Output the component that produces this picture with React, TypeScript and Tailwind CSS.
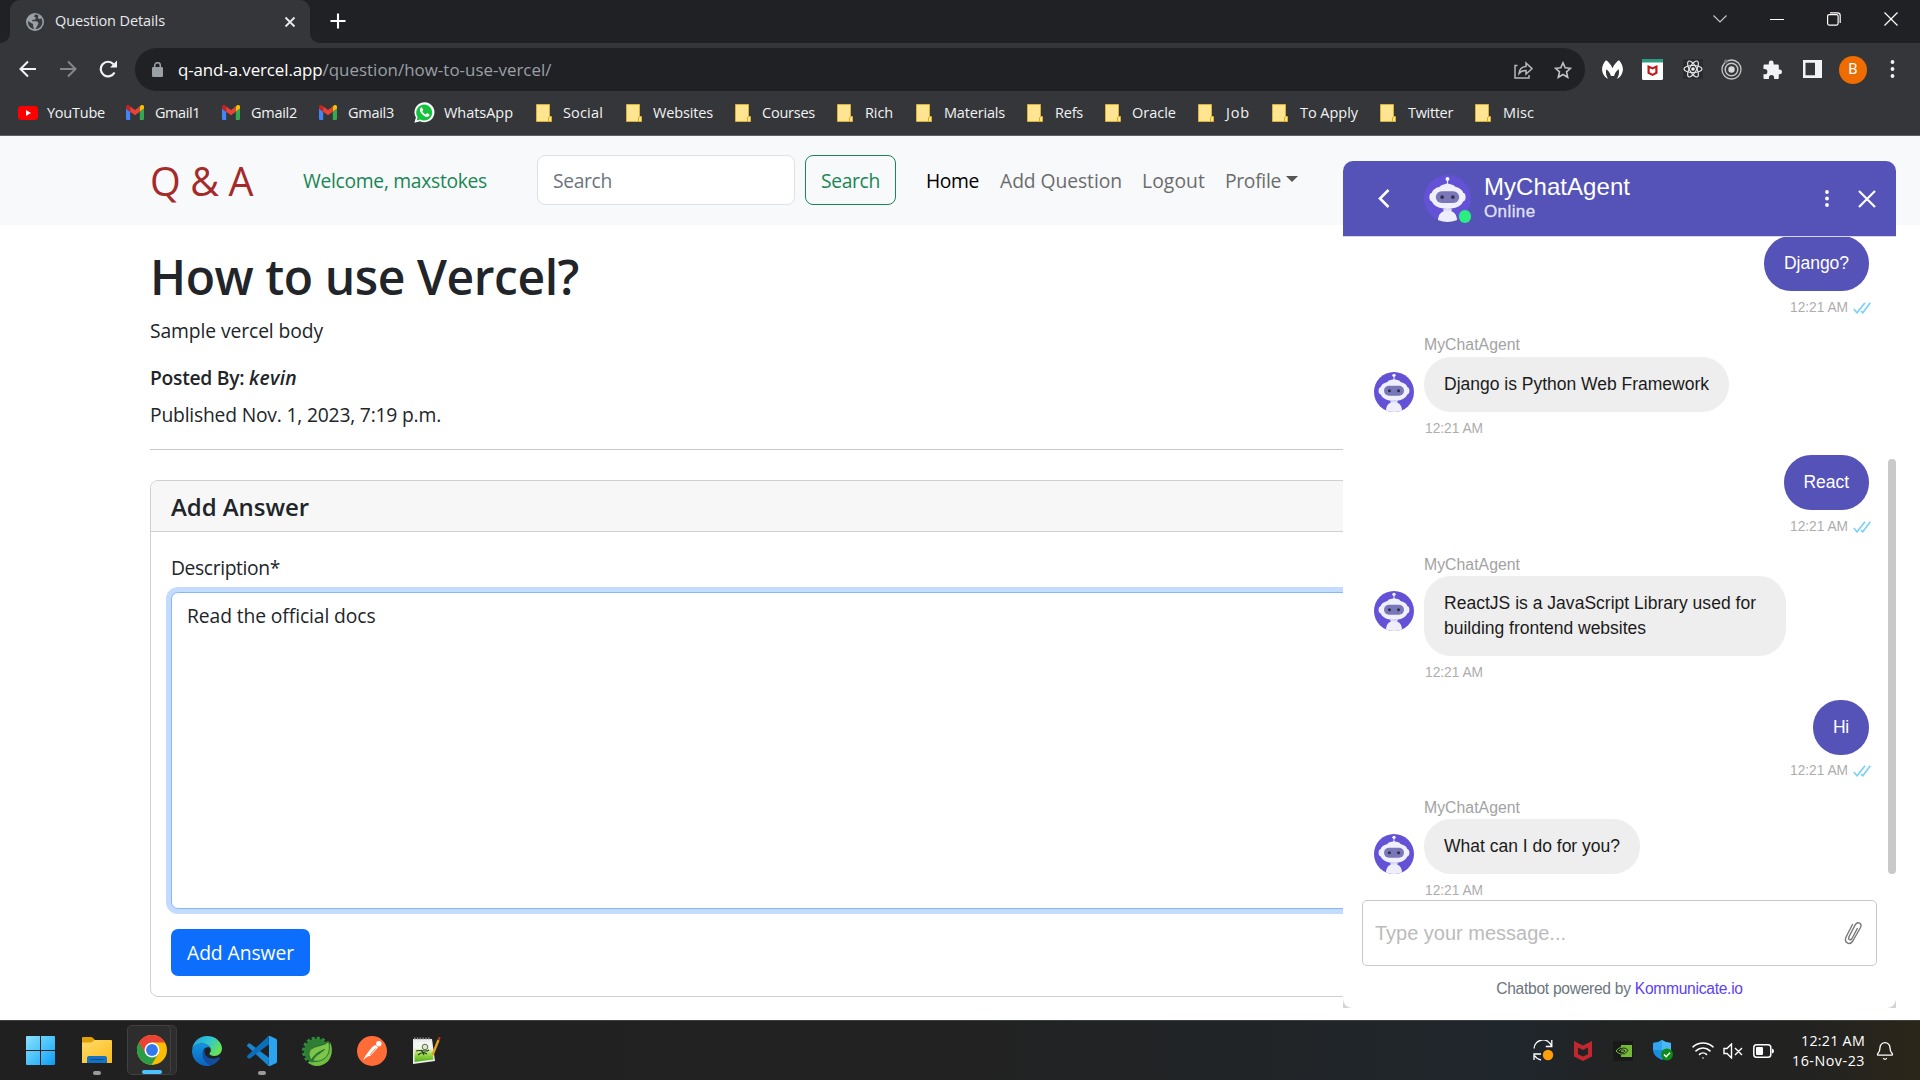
import { useLayoutEffect, useRef, useState } from "react";
import type { ReactNode } from "react";
import { Wifi, Bell } from "lucide-react";

/** Text run whose tracking is adjusted so that it occupies exactly `w` pixels. */
function Fit({ w, children, className = "" }: { w: number; children: string; className?: string }) {
  const ref = useRef<HTMLSpanElement>(null);
  const [spacing, setSpacing] = useState(0);
  useLayoutEffect(() => {
    const el = ref.current;
    if (el) setSpacing((w - el.getBoundingClientRect().width) / children.length);
  }, [w, children]);
  return (
    <span ref={ref} className={`inline-block whitespace-pre ${className}`} style={{ letterSpacing: `${spacing}px` }}>
      {children}
    </span>
  );
}

/* ---------- browser icons ---------- */

const GlobeIcon = () => (
  <svg width="18" height="18" viewBox="0 0 18 18">
    <circle cx="9" cy="9" r="9" fill="#9aa0a6" />
    <path d="M2 8l3 2 2 1v2l1 3c-4-.6-6.500-4-6-8z M9 1.600l-1 2 2 1.200-1 2H6.500L6 8.200h5l1.500 2-1 2.300-2 3.700c4-.2 6.900-3.500 6.900-7.200 0-1.400-.4-2.700-1-3.700l-2 .7-1.600-1 .8-2.600C11.400 1.800 10.200 1.500 9 1.600z" fill="#3a3b3f" />
  </svg>
);

const GmailIcon = () => (
  <svg width="18" height="15" viewBox="0 0 18 15">
    <path d="M0 3.500L4.200 6.700V15H1.200A1.200 1.200 0 0 1 0 13.800z" fill="#4285f4" />
    <path d="M18 3.500l-4.200 3.200V15h3a1.200 1.200 0 0 0 1.200-1.200z" fill="#34a853" />
    <path d="M13.800 1.400v5.300L18 3.500V2c0-2-2-2.500-3.200-1.500z" fill="#fbbc04" />
    <path d="M0 3.500l4.200 3.200V1.400L3.200.5C2-.5 0 0 0 2z" fill="#c5221f" />
    <path d="M4.200 6.700V1.400L9 5l4.800-3.600v5.300L9 10.300z" fill="#ea4335" />
  </svg>
);

const YouTubeIcon = () => (
  <svg width="20" height="14" viewBox="0 0 20 14">
    <rect width="20" height="14" rx="3.500" fill="#f00" />
    <path d="M8 4l5 3-5 3z" fill="#fff" />
  </svg>
);

const WhatsAppIcon = () => (
  <svg width="21" height="21" viewBox="0 0 21 21">
    <path d="M.4 20.700l1.500-5.300A10 10 0 1 1 6 19.200z" fill="#fff" />
    <path d="M2.700 18.400l.9-3.300A8 8 0 1 1 6.200 17.500z" fill="#14c23d" />
    <path d="M7.400 5.600c-.6 0-1.700 1-1.500 2.600.3 2.800 4.200 6.600 7 6.600 1.400 0 2.500-1 2.500-1.900 0-.6-.2-.7-2.200-1.600-.5-.2-1 1.100-1.500 1.100-.7 0-3.300-2.200-3.300-2.900 0-.4.900-.9.800-1.400l-.9-2.100c-.2-.4-.5-.4-.9-.4z" fill="#fff" />
  </svg>
);

const FolderIcon = () => (
  <svg width="16" height="18" viewBox="0 0 16 18">
    <path d="M.5.500h13v12h2v5H.5z" fill="#ffe591" stroke="#d9b13a" strokeWidth="1" />
    <path d="M12.500 17.500v-3.500l1-1.500" fill="none" stroke="#d9a91e" />
  </svg>
);

const BOOKMARKS: { label: string; icon: "yt" | "gm" | "wa" | "folder"; slot: string; pad: string; w: number }[] = [
  { label: "YouTube", icon: "yt", slot: "w-[108px]", pad: "w-[29px]", w: 58 },
  { label: "Gmail1", icon: "gm", slot: "w-[96px]", pad: "w-[29px]", w: 45 },
  { label: "Gmail2", icon: "gm", slot: "w-[97px]", pad: "w-[29px]", w: 46 },
  { label: "Gmail3", icon: "gm", slot: "w-[95px]", pad: "w-[29px]", w: 46 },
  { label: "WhatsApp", icon: "wa", slot: "w-[122px]", pad: "w-[30px]", w: 69 },
  { label: "Social", icon: "folder", slot: "w-[90px]", pad: "w-[27px]", w: 40 },
  { label: "Websites", icon: "folder", slot: "w-[109px]", pad: "w-[27px]", w: 60 },
  { label: "Courses", icon: "folder", slot: "w-[102px]", pad: "w-[27px]", w: 53 },
  { label: "Rich", icon: "folder", slot: "w-[79px]", pad: "w-[28px]", w: 28 },
  { label: "Materials", icon: "folder", slot: "w-[111px]", pad: "w-[28px]", w: 61 },
  { label: "Refs", icon: "folder", slot: "w-[78px]", pad: "w-[28px]", w: 28 },
  { label: "Oracle", icon: "folder", slot: "w-[93px]", pad: "w-[27px]", w: 44 },
  { label: "Job", icon: "folder", slot: "w-[74px]", pad: "w-[28px]", w: 24 },
  { label: "To Apply", icon: "folder", slot: "w-[108px]", pad: "w-[28px]", w: 58 },
  { label: "Twitter", icon: "folder", slot: "w-[95px]", pad: "w-[28px]", w: 45 },
  { label: "Misc", icon: "folder", slot: "w-[95px]", pad: "w-[28px]", w: 31 },
];

const BOOKMARK_ICONS = { yt: <YouTubeIcon />, gm: <GmailIcon />, wa: <WhatsAppIcon />, folder: <FolderIcon /> };

function TabStrip() {
  return (
    <div className="flex h-[43px] items-end bg-[#202124]">
      <svg className="shrink-0" width="10" height="10" viewBox="0 0 10 10"><path d="M0 10h10V0a10 10 0 0 1-10 10z" fill="#35363a" /></svg>
      <div className="flex h-[43px] w-[300px] items-center rounded-t-[10px] bg-[#35363a] pl-4">
        <GlobeIcon />
        <div className="ml-[11px] flex-1 pb-[2px] text-[14.500px] leading-[20px] text-[#e8eaed]"><Fit w={110}>Question Details</Fit></div>
        <svg className="mr-[14px]" width="12" height="12" viewBox="0 0 12 12"><path d="M1.500 1.500l9 9M10.500 1.500l-9 9" stroke="#e8eaed" strokeWidth="1.800" /></svg>
      </div>
      <svg className="shrink-0" width="10" height="10" viewBox="0 0 10 10"><path d="M10 10H0V0a10 10 0 0 0 10 10z" fill="#35363a" /></svg>
      <div className="flex h-[43px] flex-1 items-center pb-px pl-[9.500px]">
        <svg width="16" height="16" viewBox="0 0 16 16"><path d="M8 .5v15M.5 8h15" stroke="#fff" strokeWidth="2.100" /></svg>
      </div>
      <div className="flex h-[38px] items-center self-start text-white">
        <svg width="14" height="8" viewBox="0 0 14 8"><path d="M.5.500L7 7 13.500.500" fill="none" stroke="#c4c5c7" strokeWidth="1.200" /></svg>
        <div className="ml-[43px] h-px w-[14px] bg-white" />
        <svg className="ml-[43px]" width="14" height="14" viewBox="0 0 14 14" fill="none" stroke="#fff" strokeWidth="1.200"><rect x=".6" y="2.600" width="10.500" height="10.500" rx="1.500" /><path d="M3 .8h7.500a2.700 2.700 0 0 1 2.700 2.700V11" /></svg>
        <svg className="ml-[43px] mr-[22px]" width="14" height="14" viewBox="0 0 14 14"><path d="M.5.500l13 13M13.500.500l-13 13" stroke="#fff" strokeWidth="1.200" /></svg>
      </div>
    </div>
  );
}

function Toolbar() {
  return (
    <div className="flex h-[53px] items-center">
      <svg className="-mt-[2px] ml-[19px]" width="18" height="18" viewBox="0 0 18 18" fill="none" stroke="#f1f3f4" strokeWidth="2"><path d="M17 9H2M9 1.500L1.500 9 9 16.500" /></svg>
      <svg className="-mt-[2px] ml-[22px]" width="18" height="18" viewBox="0 0 18 18" fill="none" stroke="#85868a" strokeWidth="2"><path d="M1 9h15M9 1.500L16.500 9 9 16.500" /></svg>
      <svg className="-mt-[2px] ml-[22px]" width="19" height="18" viewBox="0 0 19 18"><path d="M15.500 12.500A7.300 7.300 0 1 1 14.500 4.200" fill="none" stroke="#f1f3f4" strokeWidth="2.200" /><path d="M18 .5v7h-7z" fill="#f1f3f4" /></svg>
      <div className="ml-[17px] flex h-[43px] w-[1450px] items-center rounded-full bg-[#202124] pl-[17px] pr-[13px]">
        <svg width="11" height="15" viewBox="0 0 11 15"><rect y="5" width="11" height="10" rx="1.200" fill="#9aa0a6" /><path d="M2.700 6V3.500a2.800 2.800 0 0 1 5.600 0V6" fill="none" stroke="#9aa0a6" strokeWidth="1.500" /></svg>
        <div className="ml-[15px] flex-1 pt-[1px] text-[16.900px] leading-[24px] text-white">
          <Fit w={144.5}>q-and-a.vercel.app</Fit>
          <Fit w={229} className="text-[#9aa0a6]">/question/how-to-use-vercel/</Fit>
        </div>
        <svg className="mr-[21px]" width="19" height="18" viewBox="0 0 19 18" fill="none" stroke="#b4b7bb" strokeWidth="1.500"><path d="M3.500 4.500H1V17h14v-3" /><path d="M5 12.500c.3-4.500 3-6.800 7-7.100V2l6 5.700-6 5.300V9.600c-3-.1-5.500.9-7 2.900z" /></svg>
        <svg width="18" height="18" viewBox="0 0 18 18" fill="none" stroke="#c0c3c7" strokeWidth="1.600"><path d="M9 1.800l2.200 5 5.300.5-4 3.600 1.200 5.400L9 13.500l-4.700 2.800 1.200-5.400-4-3.600 5.300-.5z" /></svg>
      </div>
      <svg className="-mt-[1px] ml-[17px]" width="21" height="19" viewBox="0 0 21 19"><path d="M4 .3c2.600 1.400 4.800 4.300 6.500 7.900C12.200 4.600 14.400 1.700 17 .3c3.700 4 5.300 9.500 2.500 14.200-.9 1.700-2.300 3.300-4.700 4.200 2.100-3 2.600-5.700 1.900-9.400-2.200 1.500-3.700 3.400-4.600 6.700H8.900C8 12.700 6.500 10.800 4.300 9.300c-.7 3.700-.2 6.400 1.900 9.400-2.400-.9-3.800-2.500-4.700-4.200C-1.300 9.800.3 4.300 4 .3z" fill="#fff" /></svg>
      <svg className="-mt-[1px] ml-[19px]" width="21" height="21" viewBox="0 0 21 21"><rect width="21" height="21" rx="1.500" fill="#fff" /><path d="M0 0h21v3.500H0z" fill="#2e9c84" /><path d="M5.500 6l5 2.300 5-2.300v8.500L10.500 17l-5-2.500zM7.700 9.300v4l2.800 1.400 2.800-1.400v-4l-2.800 1.300z" fill="#c01818" fillRule="evenodd" /></svg>
      <svg className="-mt-[2px] ml-[20px]" width="20" height="20" viewBox="0 0 20 20"><rect width="20" height="20" fill="#292b2e" /><g fill="none" stroke="#e5e5e5" strokeWidth="1.200"><ellipse cx="10" cy="10" rx="9" ry="3.500" /><ellipse cx="10" cy="10" rx="9" ry="3.500" transform="rotate(60 10 10)" /><ellipse cx="10" cy="10" rx="9" ry="3.500" transform="rotate(120 10 10)" /></g><circle cx="10" cy="10" r="1.800" fill="#eee" /></svg>
      <svg className="-mt-[1px] ml-[18px]" width="21" height="21" viewBox="0 0 21 21" fill="none" stroke="#c4c4c4"><circle cx="10.500" cy="10.500" r="9.500" strokeWidth="1.300" /><circle cx="10.500" cy="10.500" r="6.300" strokeWidth="1.500" /><circle cx="10.500" cy="10.500" r="3.200" fill="#d8d8d8" stroke="none" /><circle cx="5" cy="2.500" r="2" fill="#777" stroke="none" /></svg>
      <svg className="-mt-[1px] ml-[21px]" width="19" height="19" viewBox="0 0 19 19"><path d="M1.500 4.500h4.300V3a2.400 2.400 0 0 1 4.800 0v1.500h4.200a1 1 0 0 1 1 1v4h.8a2.400 2.400 0 0 1 0 4.800h-.8V18a1 1 0 0 1-1 1h-3.700v-1.300a2.600 2.600 0 0 0-5.200 0V19H1.500a1 1 0 0 1-1-1v-3.700h1.300a2.600 2.600 0 0 0 0-5.200H.5V5.500a1 1 0 0 1 1-1z" fill="#f1f3f4" /></svg>
      <svg className="-mt-[2px] ml-[21px]" width="19" height="18" viewBox="0 0 19 18"><path fillRule="evenodd" d="M0 0h19v18H0zM2.500 2.700v12.600H12V2.700z" fill="#f1f3f4" /></svg>
      <div className="ml-[17px] flex h-[28px] w-[28px] items-center justify-center rounded-full bg-[#ef6c00] font-[Roboto] text-[15px] text-white">B</div>
      <svg className="-mt-[1px] ml-[23px]" width="5" height="18" viewBox="0 0 5 18" fill="#f1f3f4"><circle cx="2.500" cy="2" r="1.900" /><circle cx="2.500" cy="9" r="1.900" /><circle cx="2.500" cy="16" r="1.900" /></svg>
    </div>
  );
}

function Bookmarks() {
  return (
    <div className="flex h-[40px] items-center border-b border-[#5f6063] pl-[18px] pb-[6px]">
      {BOOKMARKS.map((b) => (
        <div key={b.label} className={`flex shrink-0 items-center ${b.slot}`}>
          <div className={`shrink-0 ${b.pad}`}>{BOOKMARK_ICONS[b.icon]}</div>
          <div className="text-[14.500px] leading-[20px] text-[#f1f3f4]"><Fit w={b.w}>{b.label}</Fit></div>
        </div>
      ))}
    </div>
  );
}

/* ---------- page ---------- */

function Navbar() {
  return (
    <nav className="flex h-[89px] items-center bg-[#f8f9fa] pb-[1px] pl-[150px] text-[19.300px] leading-[30px]">
      <div className="w-[153px] pt-[2px] text-[39.500px] leading-[56px] text-[#a52a2a]"><Fit w={103}>Q &amp; A</Fit></div>
      <div className="w-[234px] pt-[2px] text-[#198754]"><Fit w={184}>Welcome, maxstokes</Fit></div>
      <div className="flex h-[50px] w-[258px] items-center rounded-[8px] border border-[#dee2e6] bg-white pl-[15px] pt-[2px] text-[#6c757d]"><Fit w={59}>Search</Fit></div>
      <div className="ml-[10px] flex h-[50px] w-[91px] items-center justify-center rounded-[8px] border border-[#198754] pt-[2px] text-[#198754]"><Fit w={59}>Search</Fit></div>
      <div className="ml-[30px] flex items-center pt-[2px] text-[#6b6c6d]">
        <div className="w-[74px] text-black"><Fit w={53}>Home</Fit></div>
        <div className="w-[142px]"><Fit w={122}>Add Question</Fit></div>
        <div className="w-[83px]"><Fit w={63}>Logout</Fit></div>
        <Fit w={56}>Profile</Fit>
        <div className="-mt-[4px] ml-[5px] h-0 w-0 border-x-[6px] border-t-[6px] border-x-transparent border-t-[#555]" />
      </div>
    </nav>
  );
}

function Question() {
  return (
    <main className="flex w-[1770px] flex-col pl-[150px] pt-[22px] text-[19.300px] leading-[30px] text-[#212529]">
      <h1 className="text-[48px] font-semibold leading-[60px]"><Fit w={429}>How to use Vercel?</Fit></h1>
      <p className="mt-[9px]"><Fit w={173}>Sample vercel body</Fit></p>
      <div className="mt-[17px] font-semibold">
        <Fit w={99}>Posted By: </Fit>
        <Fit w={48} className="italic">kevin</Fit>
      </div>
      <p className="mt-[7px]"><Fit w={291}>Published Nov. 1, 2023, 7:19 p.m.</Fit></p>
      <hr className="mt-[19px] border-[#c8c9ca]" />
      <section className="mt-[30px] h-[517px] rounded-[8px] border border-[#cfd0d1]">
        <h5 className="flex h-[51px] items-center rounded-t-[7px] border-b border-[#cfd0d1] bg-[#f7f7f7] pl-[20px] pt-[2px] text-[24px] font-semibold"><Fit w={138}>Add Answer</Fit></h5>
        <div className="flex flex-col px-[20px] pt-[21px]">
          <label><Fit w={109}>Description*</Fit></label>
          <div className="mt-[9px] h-[317px] rounded-[7px] border border-[#86b7fe] bg-white pl-[15px] pt-[8px] ring-[5px] ring-[#c2dbff]"><Fit w={188.5}>Read the official docs</Fit></div>
          <button className="mt-[20px] flex h-[47px] w-[139px] items-center justify-center rounded-[7px] bg-[#0d6efd] pt-px text-white"><Fit w={107}>Add Answer</Fit></button>
        </div>
      </section>
    </main>
  );
}

/* ---------- chat ---------- */

function BotAvatar({ size }: { size: number }) {
  return (
    <svg className="shrink-0" width={size} height={size} viewBox="0 0 48 48">
      <defs><clipPath id="botclip"><circle cx="24" cy="24" r="24" /></clipPath></defs>
      <g clipPath="url(#botclip)">
        <rect width="48" height="48" fill="#6352d6" />
        <path d="M24 4v7" stroke="#e9e8fb" strokeWidth="1.200" />
        <circle cx="24" cy="4" r="2" fill="#f3f2ff" />
        <path d="M16 12q1-2 5-2.600Q24 8 27 9.400q4 .6 5 2.600 7 2 8 6 2.500.5 2.500 4.500T40 27q-2 4.500-8 6.500-8 2.200-16 0-6-2-8-6.500-2.500-.5-2.500-4.500T8 18q1-4 8-6z" fill="#f0effd" />
        <rect x="12" y="16.500" width="24" height="12" rx="6" fill="#7a77b8" />
        <circle cx="18.500" cy="22.500" r="1.900" fill="#2f2f4c" />
        <circle cx="29.500" cy="22.500" r="1.900" fill="#2f2f4c" />
        <path d="M20 34.500h8v2.500q5.500 1.500 6 11H14q.5-9.500 6-11z" fill="#efeefd" />
        <path d="M20 34.500h8v2h-8z" fill="#dcdaf5" />
      </g>
    </svg>
  );
}

const Ticks = () => (
  <svg width="18" height="12" viewBox="0 0 18 12" fill="none" stroke="#7dd0f8" strokeWidth="1.700"><path d="M.8 7l3.200 3.800L12 .8M8 9l1.800 1.800L17.300.8" /></svg>
);

function UserMessage({ text, w, className, timeClass = "mt-[7px]" }: { text: string; w: number; className: string; timeClass?: string }) {
  return (
    <div className={`flex h-[82px] flex-col items-end pr-[27px] ${className}`}>
      <div className="rounded-[27px] bg-[#5553b7] px-[20px] py-[15px] text-[17.500px] leading-[25px] text-white"><Fit w={w}>{text}</Fit></div>
      <div className={`-mr-[2px] flex h-[20px] items-center gap-[5px] text-[13.750px] leading-[20px] text-[#adadad] ${timeClass}`}><Fit w={58}>12:21 AM</Fit><Ticks /></div>
    </div>
  );
}

function BotMessage({ lines, className, bubble = "", labelClass = "pt-px" }: { lines: [string, number][]; className: string; bubble?: string; labelClass?: string }) {
  return (
    <div className={`flex pl-[31px] ${className}`}>
      <div className="w-[50px] pt-[37px]"><BotAvatar size={40} /></div>
      <div className="flex flex-col items-start text-[#adadad]">
        <div className={`h-[20px] text-[15.800px] leading-[20px] text-[#a3a3a3] ${labelClass}`}><Fit w={96}>MyChatAgent</Fit></div>
        <div className={`mt-[2px] flex flex-col items-start rounded-[27px] bg-[#eee] px-[20px] py-[15px] text-[17.500px] leading-[25px] text-[#1b1b1b] ${bubble}`}>
          {lines.map(([t, w]) => <Fit key={t} w={w}>{t}</Fit>)}
        </div>
        <div className="mt-[7px] h-[20px] pl-[1px] text-[13.750px] leading-[20px]"><Fit w={58}>12:21 AM</Fit></div>
      </div>
    </div>
  );
}

function Chat() {
  return (
    <aside className="absolute left-[1343px] top-[161px] h-[847px] w-[553px] overflow-hidden rounded-t-[10px] bg-[#d4d4d4] font-['Liberation_Sans',sans-serif]">
      <div className="flex h-full flex-col overflow-hidden rounded-b-[9px] bg-white">
        <header className="flex h-[76px] shrink-0 items-center border-b border-[#d8d8e6] bg-[#5553b7] text-white">
          <svg className="ml-[35px]" width="12" height="19" viewBox="0 0 12 19"><path d="M10.500 1L2 9.500l8.500 8.500" fill="none" stroke="#fff" strokeWidth="2.600" /></svg>
          <div className="relative ml-[34px]">
            <BotAvatar size={47} />
            <div className="absolute bottom-[-1px] right-0 h-[13px] w-[12px] rounded-full bg-[#2bee80]" />
          </div>
          <div className="-mt-px ml-[13px] flex flex-1 flex-col items-start">
            <div className="text-[24px] leading-[26px]"><Fit w={146}>MyChatAgent</Fit></div>
            <div className="text-[17px] leading-[23px] text-[#e2e2f6] [-webkit-text-stroke:0.3px_#e2e2f6]"><Fit w={51.5}>Online</Fit></div>
          </div>
          <svg width="4" height="17" viewBox="0 0 4 17" fill="#fff"><circle cx="2" cy="2" r="1.900" /><circle cx="2" cy="8.500" r="1.900" /><circle cx="2" cy="15" r="1.900" /></svg>
          <svg className="ml-[29px] mr-[20px]" width="18" height="18" viewBox="0 0 18 18"><path d="M1 1l16 16M17 1L1 17" stroke="#fff" strokeWidth="2.200" /></svg>
        </header>
        <div className="flex h-[663px] shrink-0 overflow-hidden">
          <div className="flex flex-1 flex-col">
            <UserMessage text="Django?" w={65} className="-mt-px" />
            <BotMessage className="mt-[17px]" labelClass="" lines={[["Django is Python Web Framework", 265]]} />
            <UserMessage text="React" w={45.5} className="mt-[16px]" />
            <BotMessage className="mt-[17px]" bubble="w-[362px]" lines={[["ReactJS is a JavaScript Library used for", 312], ["building frontend websites", 202]]} />
            <UserMessage text="Hi" w={16} className="mt-[17px]" timeClass="mt-[6px]" />
            <BotMessage className="mt-[16px]" lines={[["What can I do for you?", 176]]} />
          </div>
          <div className="-ml-[8px] mt-[222px] h-[415px] w-[8px] rounded-full bg-[#c9c9c9]" />
        </div>
        <div className="mx-[19px] flex h-[66px] shrink-0 items-center rounded-[5px] border border-[#c8c8c8] pl-[12px] pr-[13px] text-[20px] text-[#bbb]">
          <div className="flex-1"><Fit w={191}>Type your message...</Fit></div>
          <svg className="mt-[2px]" width="19" height="24" viewBox="0 0 19 24" fill="none" stroke="#777" strokeWidth="1.400" strokeLinecap="round"><path d="M8.500 2.500L2.300 14.500c-3 6 3.300 9.500 6.500 4.500l7.700-13.500c2.200-4.200-3-6.500-5.200-2.800L5 14.800c-1.200 2.800 1.500 4 3 1.700L13.300 6.500" /></svg>
        </div>
        <div className="flex flex-1 justify-center pt-[12px] text-[15.600px] leading-[22px] text-[#6c757d]">
          <Fit w={138.5}>Chatbot powered by </Fit>
          <Fit w={108} className="text-[#5b42f3]">Kommunicate.io</Fit>
        </div>
      </div>
    </aside>
  );
}

/* ---------- taskbar ---------- */

const WindowsIcon = () => (
  <svg width="29" height="29" viewBox="0 0 29 29">
    <defs><linearGradient id="wn" x1="0" y1="0" x2="1" y2="1"><stop offset="0" stopColor="#8be0fd" /><stop offset=".5" stopColor="#4cc4fb" /><stop offset="1" stopColor="#0e9bf5" /></linearGradient></defs>
    <path d="M1 0h13v14H0V1a1 1 0 0 1 1-1zM15 0h13a1 1 0 0 1 1 1v13H15zM0 15h14v14H1a1 1 0 0 1-1-1zM15 15h14v13a1 1 0 0 1-1 1H15z" fill="url(#wn)" />
  </svg>
);

const ExplorerIcon = () => (
  <svg width="30" height="27" viewBox="0 0 30 27">
    <defs><linearGradient id="ex" x1="0" y1="0" x2="1" y2="1"><stop offset="0" stopColor="#ffdc6b" /><stop offset="1" stopColor="#fcbb1c" /></linearGradient></defs>
    <path d="M0 1a1 1 0 0 1 1-1h8q1 0 1.800.8L13 3v5H0z" fill="#e0a106" />
    <path d="M0 5.500h9.500L12.500 3H29a1 1 0 0 1 1 1v22H0z" fill="url(#ex)" />
    <path d="M5 26v-5a2 2 0 0 1 2-2h16a2 2 0 0 1 2 2v5z" fill="#1273c4" />
    <path d="M9 22.500h12" stroke="#074a86" strokeWidth="1.200" strokeLinecap="round" />
  </svg>
);

const ChromeIcon = () => (
  <svg width="30" height="30" viewBox="0 0 48 48">
    <circle cx="24" cy="24" r="24" fill="#fbbc04" />
    <path d="M3.200 12A24 24 0 0 0 23 48L34 30 24 24z" fill="#2a9d48" />
    <path d="M3.200 12A24 24 0 0 1 44.800 12H24L13.600 30z" fill="#ea4335" />
    <circle cx="24" cy="24" r="12" fill="#fff" />
    <circle cx="24" cy="24" r="9.500" fill="#3478ee" />
  </svg>
);

const EdgeIcon = () => (
  <svg width="30" height="30" viewBox="0 0 30 30">
    <defs>
      <linearGradient id="e1" x1="0" y1="0" x2="1" y2=".5"><stop offset="0" stopColor="#1d9de4" /><stop offset=".55" stopColor="#32c5d2" /><stop offset="1" stopColor="#66e15a" /></linearGradient>
      <linearGradient id="e2" x1="0" y1="0" x2="0" y2="1"><stop offset="0" stopColor="#1493e0" /><stop offset="1" stopColor="#0b63bd" /></linearGradient>
    </defs>
    <path d="M.2 13.500C1 5.500 7.300 0 15 0c9 0 15 6.500 15 12.500 0 4.500-3.500 7.500-7.600 7.500-3 0-5-1-5-2.200 0-.7 1.400-1.400 1.400-3.600C18.800 10.500 15 7.500 10.500 7.500 5.500 7.500 1.500 10 .2 13.500z" fill="url(#e1)" />
    <path d="M.2 13.500C1.500 10 5.500 7.500 10.500 7.500c3.700 0 6.500 2 7.700 4.200-2.500-1.200-7.200-.2-7.200 5.300 0 6 4.500 11 8 12.400-1.300.4-2.600.6-4 .6C6.500 30 0 23 0 15z" fill="url(#e2)" />
    <path d="M13.200 12c-5 3-3.200 14.500 5.800 17.400 4-1 7.500-4 9-7.400.3-.8-.4-1-.9-.7-6.100 3.200-14.100.7-14.500-5.300-.1-1.500.2-3 .6-4z" fill="#114c9d" />
  </svg>
);

const CodeIcon = () => (
  <svg width="30" height="30" viewBox="0 0 30 30">
    <path d="M1.700 7.500L.3 8.800a1 1 0 0 0 0 1.500L21.500 30l.5-8.300L3 7.500a1 1 0 0 0-1.300 0z" fill="#1a86cf" />
    <path d="M1.700 22.500L.3 21.200a1 1 0 0 1 0-1.500L21.500 0l.5 8.300L3 22.500a1 1 0 0 1-1.300 0z" fill="#0a6fb8" />
    <path d="M21.500.2Q22.500-.3 23.500.2l5.500 2.600q1 .5 1 1.700v21q0 1.200-1 1.700l-5.500 2.600q-1 .5-2 0-.8-.4 0-1 .5-.4.500-1V2.200q0-.8-.5-1.100-.8-.6 0-.9z" fill="#2aa4f0" />
  </svg>
);

const SpringIcon = () => (
  <svg width="30" height="30" viewBox="0 0 30 30">
    <circle cx="14.500" cy="15" r="12.500" fill="#2f7d32" />
    <circle cx="14.500" cy="15" r="13" fill="none" stroke="#2f8a3b" strokeWidth="3" strokeDasharray="3 2.100" />
    <path d="M28 6c3 6 2.500 14-2 19.200-6 6-15 6.300-20.500.8 8 1.200 14.500-1 18-8 2-4 3-7 4.500-12z" fill="#73bd43" />
    <path d="M26.500 5C24 11 7.500 8.500 7 17.500c-.1 2.800 1 5 2.500 6.300 3-5.500 8-8.300 13-10.300-4 3.700-9.500 6-12 11.300 7.500 2 15-2.300 16.500-9.300.8-4 .2-7.500-.5-10.500z" fill="#7cc54a" stroke="#246b2b" strokeWidth=".9" />
  </svg>
);

const PostmanIcon = () => (
  <svg width="30" height="30" viewBox="0 0 30 30">
    <circle cx="15" cy="15" r="15" fill="#ff6c37" />
    <circle cx="21.800" cy="7.800" r="2.700" fill="#fff" />
    <path d="M18.500 9L21 11.500l-7.500 8.300-2.800.8L6 24l2.800-4.700 4-5.300 3.200-3.800z" fill="#fff" />
    <path d="M13 19l5.500-6.500" stroke="#ff6c37" strokeWidth=".9" />
  </svg>
);

const NotepadIcon = () => (
  <svg width="30" height="28" viewBox="0 0 30 28">
    <defs><linearGradient id="np" x1="0" y1="0" x2="0" y2="1"><stop offset=".3" stopColor="#f4f7ee" /><stop offset=".6" stopColor="#a5dc4d" /><stop offset="1" stopColor="#4fae18" /></linearGradient></defs>
    <path d="M1 2h19l3 22-22 3z" fill="#eee" />
    <path d="M2.500 5h17l2 17.500-19 2.500z" fill="url(#np)" />
    <path d="M2 1.500h17" stroke="#888" strokeWidth="2" strokeDasharray="1.500 1.300" />
    <circle cx="13" cy="10" r="2.800" fill="#dbe9cd" stroke="#5b6b52" strokeWidth="1" />
    <path d="M4 14c4-2 10 2 13-1M6 18c3-3 6-3 9-1M9 13l3 5" fill="none" stroke="#23401a" strokeWidth="1.100" />
    <path d="M26.500 3L20.500 18" stroke="#e3a11a" strokeWidth="2.400" />
    <path d="M27.700 0l-1.200 3" stroke="#a03a2a" strokeWidth="2.200" />
  </svg>
);

function TaskSlot({ children, dot }: { children: ReactNode; dot?: boolean }) {
  return (
    <div className="flex h-[49px] w-[55px] flex-col items-center">
      <div className="flex h-[49px] items-center">{children}</div>
      {dot && <div className="-mt-[4px] h-[4px] w-[8px] shrink-0 rounded-full bg-[#9a9a9a]" />}
    </div>
  );
}

function Taskbar() {
  return (
    <footer className="flex h-[60px] items-start border-t border-[#3c403e] bg-[linear-gradient(90deg,#202020_0%,#222222_50%,#20262b_76%,#1f262c_79%,#222323_84%,#222221_94%,#2b2619_100%)] pl-[13px] pt-[4px] text-white">
      <div className="pt-px"><TaskSlot><WindowsIcon /></TaskSlot></div>
      <div className="ml-[1px] pt-px"><TaskSlot dot><ExplorerIcon /></TaskSlot></div>
      <div className="flex h-[50px] w-[55px] pl-[3px]">
        <div className="relative z-10 flex h-[50px] w-[44px] shrink-0 flex-col items-center rounded-[5px] border border-[#414141] bg-[#2d2d2d] pl-[6px] pt-[9px]">
          <ChromeIcon />
          <div className="mt-[5px] h-[4px] w-[20px] shrink-0 rounded-full bg-[#4cc2ff]" />
        </div>
        <div className="-ml-[6px] h-[50px] w-[12px] rounded-r-[5px] border border-[#3c3c3c] bg-[#2d2d2d]" />
      </div>
      <div className="flex pt-px">
        <TaskSlot><EdgeIcon /></TaskSlot>
        <TaskSlot dot><CodeIcon /></TaskSlot>
        <TaskSlot><SpringIcon /></TaskSlot>
        <TaskSlot><PostmanIcon /></TaskSlot>
        <TaskSlot><NotepadIcon /></TaskSlot>
      </div>
      <div className="flex-1" />
      <div className="flex h-[50px] items-center pt-px">
        <svg width="21" height="21" viewBox="0 0 21 21"><g fill="none" stroke="#fff" strokeWidth="1.300"><path d="M1 8.500A9 9 0 0 1 18.500 6M18.800 0v6.500h-6M8 14H1v6M1.500 15.500Q3.500 19 8 20" /></g><circle cx="15" cy="15" r="5.200" fill="#ff9d0a" /></svg>
        <svg className="ml-[20px]" width="18" height="20" viewBox="0 0 18 20"><path fillRule="evenodd" d="M0 0l9 4.500L18 0v15.500L9 20l-9-4.500zM4 6.500v6.800L9 15.600l5-2.300V6.500L9 9z" fill="#c1272d" /></svg>
        <div className="ml-[21px] flex h-[20px] w-[20px] items-center justify-center bg-[#191919]">
          <svg width="17" height="12" viewBox="0 0 17 12"><path d="M6 0h11v12H6z" fill="#76b93a" /><path d="M1 6q4.500-6 9.500-2.500Q13 5.500 10 8 6 11 1 6zM4 6q2-3 4.500-1.500Q9.500 6 8 7.500" fill="none" stroke="#76b93a" /><path d="M6 3.500q5-1.500 7 2-3 4.500-7 3.500M6 5q3-.5 4 1-1.500 2-4 1.500" fill="none" stroke="#1b2a14" strokeWidth="1" /></svg>
        </div>
        <svg className="ml-[20px]" width="20" height="21" viewBox="0 0 20 21"><path d="M9 0q4 3 9 3v7q0 6-9 10Q0 16 0 10V3q5 0 9-3z" fill="#1b8de0" /><path d="M9 0q4 3 9 3v7H9z" fill="#4bb8f5" /><path d="M0 3q5 0 9-3v10H0z" fill="#31a5ee" /><circle cx="14" cy="14.500" r="6" fill="#0e8a16" /><path d="M11 14.500l2.200 2.200 3.800-4" fill="none" stroke="#fff" strokeWidth="1.600" /></svg>
        <Wifi className="-mt-[2px] ml-[18px]" size={24} strokeWidth={1.6} />
        <svg className="ml-[8px]" width="20" height="16" viewBox="0 0 20 16" fill="none" stroke="#fff" strokeWidth="1.400"><path d="M1 5.500h3L8.500 1v14L4 10.500H1zM12 5l7 7M19 5l-7 7" /></svg>
        <svg className="ml-[10px]" width="21" height="14" viewBox="0 0 21 14"><rect x=".8" y=".8" width="17" height="12.400" rx="2.800" fill="none" stroke="#fff" strokeWidth="1.500" /><rect x="3" y="3" width="7" height="8" rx="1" fill="#fff" /><path d="M19 4.500q2 .5 2 2.500t-2 2.500z" fill="#fff" /></svg>
        <div className="ml-[11px] flex w-[80px] flex-col items-end text-[14.300px] leading-[20px]">
          <Fit w={64}>12:21 AM</Fit>
          <Fit w={73}>16-Nov-23</Fit>
        </div>
        <Bell className="ml-[10px] mr-[25px]" size={20} strokeWidth={1.600} />
      </div>
    </footer>
  );
}

export default function App() {
  return (
    <div className="relative flex h-[1080px] w-[1920px] flex-col overflow-hidden bg-white font-['Open_Sans',sans-serif]">
      <div className="h-[136px] shrink-0 bg-[#35363a]">
        <TabStrip />
        <Toolbar />
        <Bookmarks />
      </div>
      <div className="h-[884px] shrink-0 overflow-hidden">
        <Navbar />
        <Question />
      </div>
      <Chat />
      <Taskbar />
    </div>
  );
}
